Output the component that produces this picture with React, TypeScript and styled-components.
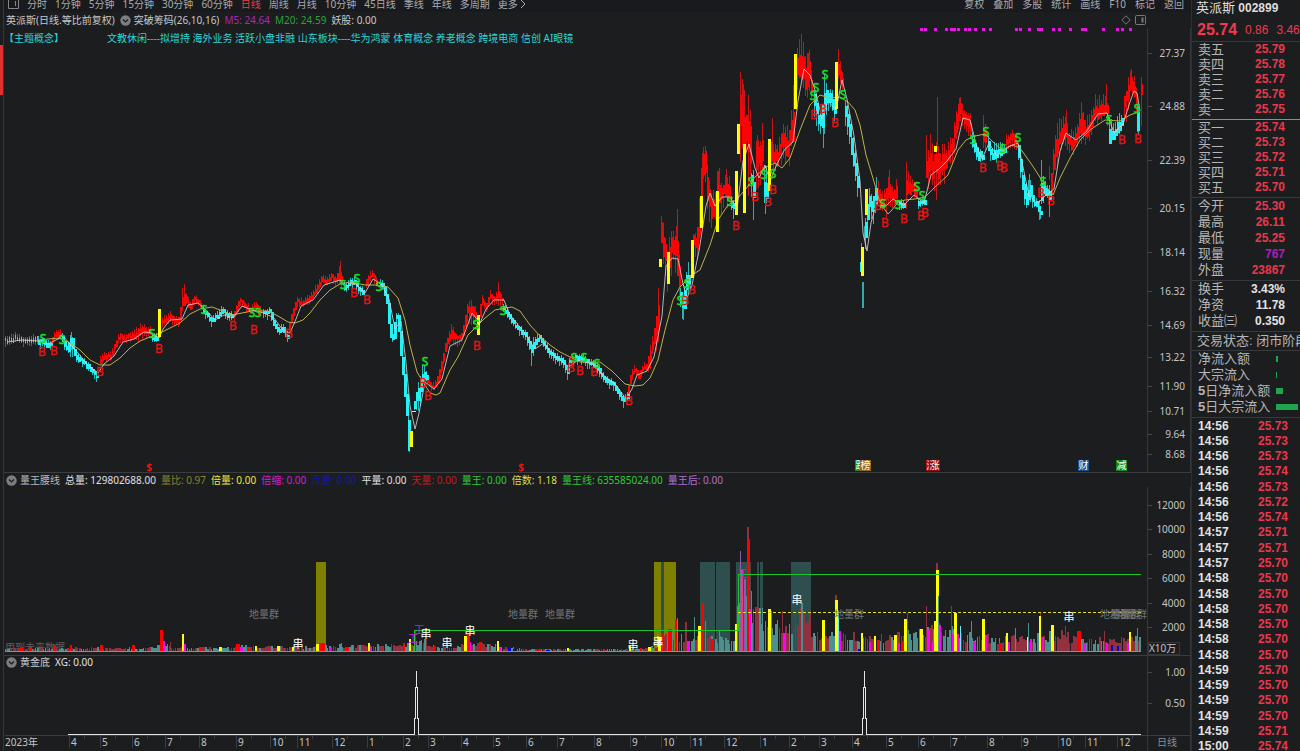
import React from 'react';
import styled, { createGlobalStyle } from 'styled-components';

const GlobalStyle = createGlobalStyle`
  * { box-sizing: border-box; }
  body {
    margin: 0;
    background: #1c1d1f;
    color: #c4c4c6;
    font-family: "Noto Sans", "Noto Sans CJK SC", sans-serif;
    font-size: 10px;
  }
`;

/* ---------- data ---------- */

type Point = number[]; // [x, middle] or [x, high, low]
type Tone = 'up' | 'down' | 'flat';

const segments: { tone: Tone; points: Point[] }[] = [
  { tone: 'flat', points: [[5, 341], [15, 338], [25, 341], [37, 339]] },
  { tone: 'down', points: [[38, 341], [45, 344], [51, 345]] },
  { tone: 'up', points: [[52, 341], [55, 333], [60, 335]] },
  { tone: 'down', points: [[62, 338], [67, 351], [71, 333, 348], [75, 355], [80, 361], [88, 366], [96, 376]] },
  { tone: 'up', points: [[100, 361], [104, 357], [110, 356], [115, 347], [119, 337], [125, 338], [133, 336], [140, 326, 336], [150, 332]] },
  { tone: 'down', points: [[152, 336], [157, 339]] },
  { tone: 'up', points: [[162, 322], [170, 317], [178, 322], [181, 312], [183, 290, 308], [187, 300], [190, 308], [194, 299], [201, 305]] },
  { tone: 'down', points: [[203, 311], [211, 321], [216, 317], [222, 311], [226, 315], [231, 316]] },
  { tone: 'up', points: [[234, 315], [240, 301], [245, 306], [250, 311], [256, 306], [261, 313]] },
  { tone: 'down', points: [[263, 314], [270, 311], [274, 324], [278, 331], [283, 328], [287, 337]] },
  { tone: 'up', points: [[289, 328], [292, 317], [297, 300], [302, 304], [311, 297], [316, 289], [321, 280], [326, 282], [331, 277], [336, 281], [340, 268, 282], [342, 283]] },
  { tone: 'down', points: [[344, 288], [350, 283], [355, 281], [358, 289], [363, 293]] },
  { tone: 'up', points: [[366, 283], [369, 276], [373, 276], [377, 283]] },
  { tone: 'down', points: [[380, 284], [384, 288], [388, 305], [391, 335], [393, 341], [396, 317], [399, 318], [401, 350], [404, 375], [407, 405, 415], [409, 425, 450]] },
  { tone: 'down', points: [[414, 406], [417, 392, 408], [420, 380, 398], [423, 366, 382], [426, 376]] },
  { tone: 'up', points: [[427, 382], [433, 388], [438, 380], [442, 362], [447, 342], [451, 329, 341], [457, 339], [462, 337], [465, 322], [468, 302, 318], [475, 308, 320]] },
  { tone: 'up', points: [[480, 312], [482, 300], [486, 308], [490, 296], [495, 300], [498, 290, 302], [502, 301]] },
  { tone: 'down', points: [[503, 308], [510, 318], [515, 326], [520, 330], [525, 335], [531, 343, 357], [536, 340], [540, 337], [545, 346], [550, 354], [557, 358], [563, 362], [567, 370], [569, 362]] },
  { tone: 'up', points: [[570, 360], [573, 361]] },
  { tone: 'down', points: [[575, 358], [580, 358], [585, 360], [590, 364], [598, 368], [602, 377], [608, 382], [614, 385], [618, 392], [623, 401], [627, 397]] },
  { tone: 'up', points: [[628, 394], [631, 373], [635, 370], [639, 378], [643, 367], [647, 369], [650, 350, 364], [654, 335, 350], [657, 312, 335], [659, 292, 330]] },
  { tone: 'up', points: [[661, 225, 245], [664, 234, 260], [667, 258, 286], [670, 232, 262], [674, 240, 255], [677, 228, 270], [679, 260, 294]] },
  { tone: 'down', points: [[680, 290, 304], [683, 302, 318], [686, 275, 295], [689, 266, 285]] },
  { tone: 'up', points: [[693, 235, 250], [697, 238, 252], [700, 205, 230], [702, 156, 180], [705, 148, 178], [708, 180, 208], [712, 198, 220], [715, 193, 218], [718, 172, 200], [722, 190, 204], [726, 175, 194], [729, 185, 206]] },
  { tone: 'down', points: [[731, 198, 208], [735, 203, 214]] },
  { tone: 'up', points: [[740, 82, 130], [743, 95, 145], [746, 125, 155], [748, 100, 160], [750, 125, 180]] },
  { tone: 'down', points: [[751, 175, 192], [754, 180, 210]] },
  { tone: 'up', points: [[756, 142, 178], [760, 150, 175], [763, 128, 165]] },
  { tone: 'down', points: [[764, 178, 206], [767, 175, 195]] },
  { tone: 'up', points: [[771, 145, 165], [776, 148, 164], [780, 142, 162], [783, 130, 150], [786, 138, 165], [790, 132, 155], [793, 100, 140]] },
  { tone: 'up', points: [[797, 55, 80], [801, 45, 78], [805, 65, 92], [809, 60, 85], [812, 85, 104]] },
  { tone: 'down', points: [[814, 92, 108], [818, 112, 128], [821, 120, 134], [824, 86, 120], [828, 90, 102], [831, 93, 108], [834, 104, 118]] },
  { tone: 'up', points: [[838, 62, 80], [841, 66, 82], [843, 80, 94]] },
  { tone: 'down', points: [[845, 104, 122], [850, 124, 140], [853, 148, 172], [857, 172, 190]] },
  { tone: 'down', points: [[865, 225, 245], [869, 195, 210], [873, 200, 215], [876, 185, 208]] },
  { tone: 'up', points: [[878, 185, 202], [883, 197, 208], [889, 182, 204], [894, 192, 203], [897, 180, 200]] },
  { tone: 'down', points: [[899, 203], [904, 205]] },
  { tone: 'up', points: [[906, 178, 198], [912, 182, 192], [916, 186, 198]] },
  { tone: 'down', points: [[918, 203], [924, 202]] },
  { tone: 'up', points: [[926, 155, 180], [930, 148, 180], [934, 158, 182], [937, 140, 178], [940, 160, 182], [943, 150, 178], [947, 150, 162], [952, 140, 158], [956, 118, 142], [960, 100, 118], [964, 112, 126], [970, 118, 132]] },
  { tone: 'down', points: [[972, 136, 146], [977, 150, 162], [982, 152, 160]] },
  { tone: 'up', points: [[983, 125, 142], [986, 124, 142]] },
  { tone: 'down', points: [[988, 138, 150], [991, 152, 162], [995, 146, 158], [1000, 145, 155], [1004, 150]] },
  { tone: 'up', points: [[1006, 138, 148], [1012, 132, 144], [1017, 138, 146]] },
  { tone: 'down', points: [[1018, 145, 156], [1022, 168, 188], [1026, 195, 208], [1029, 178, 200], [1033, 203], [1036, 203], [1040, 212]] },
  { tone: 'down', points: [[1041, 175, 200], [1045, 186, 196], [1049, 188, 200]] },
  { tone: 'up', points: [[1051, 178, 195], [1054, 148, 172], [1058, 130, 155], [1063, 120, 140], [1068, 134, 150], [1073, 135, 150], [1077, 130, 145], [1081, 112, 138], [1085, 125, 140], [1090, 118, 134], [1095, 102, 120], [1099, 104, 122], [1103, 100, 116], [1107, 105, 120]] },
  { tone: 'down', points: [[1109, 124, 142], [1114, 128, 138], [1118, 120, 134], [1122, 117, 128]] },
  { tone: 'up', points: [[1124, 100, 116], [1128, 84, 104], [1131, 75, 88], [1134, 82, 100], [1136, 92, 106]] },
  { tone: 'down', points: [[1137, 106, 132]] },
  { tone: 'up', points: [[1141, 82, 98]] },
];

/* single long wicks: [x, top, bottom] */
const upWicks: Point[] = [
  [182, 288, 308], [340, 261, 278], [498, 282, 300], [662, 222, 240], [676, 226, 250], [702, 153, 190], [705, 146, 180],
  [718, 171, 200], [726, 169, 190], [740, 72, 120], [743, 84, 140], [748, 95, 150], [757, 135, 170], [762, 123, 150], [772, 118, 160],
  [783, 126, 140], [793, 94, 130], [797, 50, 70], [801, 38, 80], [808, 53, 80], [838, 49, 70], [889, 170, 190], [906, 162, 190],
  [926, 135, 170], [930, 137, 170], [937, 97, 150], [959, 98, 110], [983, 115, 145], [1049, 166, 180], [1066, 110, 130], [1081, 105, 120],
  [1095, 94, 110], [1106, 84, 110], [1131, 69, 80], [1141, 80, 126],
];
const downWicks: Point[] = [
  [71, 332, 350], [409, 421, 452], [531, 345, 366], [567, 366, 380], [683, 305, 320], [692, 255, 275], [753, 190, 220], [765, 190, 214],
  [823, 110, 148], [861, 243, 272], [862, 282, 308], [863, 282, 308], [864, 226, 240], [876, 177, 200], [1029, 174, 200], [1039, 200, 220], [1041, 160, 200],
  [1049, 190, 217], [1138, 106, 134],
];
/* [x, top, bottom] */
const surgeBars: Point[] = [
  [158, 309, 337], [410, 431, 447], [477, 315, 335], [659, 259, 267], [667, 252, 284], [691, 240, 278], [700, 196, 228], [716, 191, 232],
  [735, 171, 215], [737, 124, 154], [743, 144, 213], [768, 139, 191], [794, 54, 109], [835, 62, 109], [865, 189, 215], [861, 247, 276], [934, 146, 152],
];

const longAverage: Point[] = [
  [37, 340], [60, 338], [70, 343], [80, 350], [90, 360], [100, 365], [110, 365], [120, 358], [130, 348], [140, 341], [150, 337], [158, 334],
  [168, 329], [180, 323], [190, 314], [200, 309], [212, 307], [220, 310], [232, 315], [242, 313], [252, 311], [268, 311], [278, 316], [288, 322],
  [295, 323], [303, 320], [310, 313], [320, 300], [330, 290], [340, 284], [350, 282], [365, 285], [375, 285], [388, 287], [398, 298], [405, 320],
  [410, 345], [417, 372], [425, 385], [430, 393], [436, 395], [440, 393], [450, 370], [458, 357], [468, 335], [476, 327], [485, 318], [495, 310],
  [505, 308], [512, 307], [520, 311], [530, 325], [540, 336], [550, 345], [560, 352], [570, 357], [580, 362], [600, 362], [612, 371], [625, 384],
  [635, 386], [643, 385], [650, 378], [658, 360], [665, 330], [673, 300], [680, 287], [692, 275], [700, 270], [710, 245], [718, 220], [728, 205],
  [736, 200], [745, 190], [755, 177], [766, 167], [775, 163], [782, 168], [790, 158], [800, 130], [810, 105], [820, 95], [830, 98], [840, 97],
  [848, 102], [855, 110], [860, 125], [866, 155], [875, 185], [880, 203], [888, 214], [892, 210], [898, 202], [905, 200], [915, 199], [925, 197],
  [935, 187], [948, 175], [958, 150], [966, 140], [975, 136], [985, 134], [993, 142], [1002, 150], [1012, 145], [1020, 148], [1032, 165],
  [1045, 185], [1053, 195], [1060, 178], [1070, 158], [1080, 140], [1090, 130], [1105, 120], [1120, 121], [1130, 115], [1138, 112],
];
const shortAverage: Point[] = [
  [5, 341], [20, 339], [36, 340], [46, 343], [54, 339], [61, 335], [68, 343], [76, 352], [86, 364], [96, 372], [102, 363], [112, 355], [121, 341],
  [132, 338], [142, 331], [150, 332], [157, 337], [161, 328], [168, 319], [180, 318], [186, 304], [196, 302], [204, 309], [213, 319], [222, 314],
  [231, 317], [240, 305], [250, 309], [262, 312], [272, 317], [280, 328], [288, 332], [294, 318], [299, 305], [311, 299], [322, 284], [338, 279],
  [345, 285], [354, 283], [363, 292], [371, 278], [380, 284], [387, 298], [393, 328], [399, 320], [404, 362], [408, 405], [413, 428], [417, 412],
  [423, 381], [432, 388], [440, 378], [448, 345], [460, 339], [470, 312], [478, 322], [484, 308], [492, 299], [502, 299], [508, 314], [522, 331],
  [533, 348], [542, 342], [552, 354], [567, 366], [576, 359], [590, 363], [600, 373], [614, 384], [624, 398], [630, 388], [635, 374], [645, 370],
  [652, 356], [660, 315], [664, 265], [670, 257], [676, 258], [681, 283], [685, 297], [690, 284], [697, 250], [704, 205], [708, 192], [713, 205],
  [720, 196], [728, 196], [735, 208], [741, 160], [747, 143], [753, 167], [757, 177], [763, 164], [768, 180], [775, 163], [783, 148], [791, 141],
  [796, 100], [802, 68], [808, 74], [814, 92], [820, 118], [826, 100], [834, 109], [840, 79], [845, 98], [852, 135], [858, 180], [861, 232],
  [865, 250], [869, 222], [874, 204], [884, 205], [891, 198], [902, 204], [912, 194], [922, 202], [929, 174], [937, 168], [945, 160], [954, 148],
  [961, 117], [968, 119], [974, 143], [980, 158], [987, 142], [995, 155], [1008, 145], [1016, 142], [1021, 166], [1027, 195], [1036, 202],
  [1043, 195], [1052, 188], [1058, 150], [1064, 132], [1074, 139], [1084, 131], [1096, 113], [1105, 112], [1112, 132], [1121, 123], [1128, 101],
  [1132, 90], [1135, 92], [1138, 110],
];

const buyMarks: Point[] = [
  [42, 352], [54, 351], [159, 349], [100, 372], [233, 326], [254, 330], [289, 334], [354, 293], [367, 300], [423, 383], [428, 396], [477, 346],
  [571, 368], [580, 371], [594, 372], [629, 401], [685, 301], [692, 290], [736, 226], [755, 197], [768, 202], [773, 190], [814, 115], [823, 109],
  [835, 123], [885, 223], [878, 206], [904, 219], [921, 216], [925, 213], [983, 168], [1000, 166], [1004, 168], [1041, 193], [1051, 201],
  [1122, 140], [1138, 139],
];
const sellMarks: Point[] = [
  [43, 339], [62, 340], [152, 334], [204, 310], [252, 313], [258, 313], [343, 285], [357, 279], [379, 287], [425, 362], [476, 325], [503, 311],
  [574, 358], [584, 358], [597, 364], [680, 301], [687, 284], [730, 202], [751, 182], [764, 175], [773, 174], [813, 96], [816, 88], [825, 75],
  [843, 95], [883, 204], [898, 205], [917, 187], [922, 196], [973, 140], [986, 132], [1003, 149], [1018, 138], [1043, 182], [1109, 120], [1137, 109],
];
const topDots = [920, 924, 934, 945, 950, 953, 957, 964, 968, 974, 982, 989, 1015, 1019, 1028, 1037, 1040, 1052, 1058, 1069, 1081, 1084, 1102, 1116, 1121, 1129];

const priceScale: [string, number][] = [
  ['27.37', 53], ['24.88', 106], ['22.39', 160], ['20.15', 208], ['18.14', 252], ['16.32', 291],
  ['14.69', 325], ['13.22', 357], ['11.90', 386], ['10.71', 411], ['9.64', 434], ['8.68', 454],
];
const volumeScale: [string, number][] = [['12000', 505], ['10000', 529], ['8000', 554], ['6000', 578], ['4000', 603], ['2000', 627]];
const signalScale: [string, number][] = [['1.00', 672], ['0.50', 703]];

const months: [string, number][] = [
  ['4', 70], ['5', 101], ['6', 133], ['7', 166], ['8', 200], ['9', 237], ['10', 271], ['11', 298], ['12', 333], ['1', 368], ['2', 404], ['3', 429],
  ['4', 462], ['5', 494], ['6', 527], ['7', 558], ['8', 595], ['9', 631], ['10', 662], ['11', 691], ['12', 725], ['1', 761], ['2', 790], ['3', 820],
  ['4', 853], ['5', 887], ['6', 919], ['7', 951], ['8', 988], ['9', 1022], ['10', 1059], ['11', 1086], ['12', 1118],
];

const volumeLevels: Point[] = [
  [5, 3], [150, 3], [165, 8], [175, 4], [200, 4], [225, 3], [235, 5], [310, 4], [320, 6], [400, 6], [415, 9], [425, 10], [440, 5], [470, 7], [490, 7],
  [505, 4], [530, 2], [640, 2], [655, 5], [665, 16], [690, 15], [710, 16], [720, 15], [733, 9], [738, 48], [748, 62], [753, 44], [765, 30], [780, 26],
  [790, 26], [798, 46], [808, 34], [815, 19], [850, 16], [870, 14], [890, 16], [915, 20], [935, 24], [950, 24], [960, 17], [1000, 13], [1060, 18],
  [1080, 13], [1110, 11], [1141, 14],
];

const YELLOW = '#ffff00';
const RED = '#ff0000';
const MAGENTA = '#ff00ff';
const TEAL = '#4c8f8f';
const WINE = '#93303f';
const BLUE = '#0000e0';

/* [x, height, width, colour] */
const volumePeaks: [number, number, number, string][] = [
  [20, 4, 3, RED], [30, 4, 2, RED], [53, 6, 3, RED], [70, 6, 2, RED], [100, 6, 3, RED], [132, 6, 3, RED], [160, 21, 3, RED], [163, 10, 2, MAGENTA],
  [170, 9, 1, WINE], [182, 17, 2, YELLOW], [184, 7, 2, MAGENTA], [199, 4, 3, RED], [219, 4, 3, YELLOW], [236, 7, 4, RED], [240, 4, 3, MAGENTA],
  [247, 3, 2, RED], [255, 5, 2, YELLOW], [277, 5, 3, YELLOW], [292, 4, 2, YELLOW], [316, 7, 3, YELLOW], [319, 8, 6, RED], [329, 3, 2, MAGENTA],
  [341, 8, 1, TEAL], [346, 4, 3, RED], [368, 8, 2, YELLOW], [370, 4, 2, MAGENTA], [403, 8, 2, RED], [409, 12, 2, YELLOW], [414, 21, 2, RED],
  [424, 12, 2, TEAL], [433, 5, 3, RED], [464, 15, 3, YELLOW], [467, 17, 3, RED], [470, 9, 1, MAGENTA], [479, 9, 3, RED], [497, 10, 2, YELLOW],
  [499, 4, 2, MAGENTA], [508, 3, 3, BLUE], [513, 2, 3, BLUE], [538, 2, 3, RED], [546, 1, 4, BLUE], [567, 3, 2, YELLOW], [629, 5, 2, YELLOW],
  [640, 3, 2, RED], [648, 4, 3, YELLOW], [658, 14, 3, YELLOW], [661, 18, 3, RED], [668, 22, 4, RED], [675, 31, 3, RED], [677, 33, 1, TEAL],
  [685, 29, 2, WINE], [687, 10, 3, MAGENTA], [694, 34, 1, TEAL], [698, 25, 3, YELLOW], [701, 48, 3, RED], [705, 30, 1, TEAL], [711, 12, 3, RED],
  [719, 20, 1, TEAL], [735, 27, 2, YELLOW], [740, 100, 1, '#8a5bb0'], [741, 82, 2, '#f03a70'], [744, 72, 2, '#8a5bb0'], [747, 124, 2, WINE],
  [747, 112, 3, RED], [751, 60, 1, TEAL], [749, 42, 2, MAGENTA], [757, 44, 2, WINE], [762, 43, 1, TEAL], [768, 42, 3, YELLOW], [771, 40, 1, TEAL],
  [777, 28, 1, TEAL], [782, 40, 1, WINE], [783, 18, 3, MAGENTA], [800, 44, 1, WINE], [822, 31, 3, YELLOW], [835, 56, 2, WINE], [835, 51, 3, YELLOW],
  [838, 40, 1, '#60f0f0'], [839, 20, 2, MAGENTA], [858, 2, 2, BLUE], [861, 18, 2, YELLOW], [869, 9, 2, MAGENTA], [874, 15, 2, YELLOW],
  [877, 11, 3, RED], [894, 16, 3, YELLOW], [898, 8, 2, MAGENTA], [901, 10, 4, RED], [907, 38, 1, WINE], [904, 32, 3, YELLOW], [920, 22, 3, YELLOW],
  [926, 45, 1, WINE], [927, 21, 3, MAGENTA], [932, 10, 2, MAGENTA], [934, 30, 2, YELLOW], [936, 88, 2, WINE], [936, 81, 3, YELLOW],
  [938, 55, 1, TEAL], [939, 26, 2, MAGENTA], [951, 45, 1, WINE], [952, 17, 3, MAGENTA], [954, 38, 3, YELLOW], [957, 17, 2, MAGENTA], [960, 25, 1, '#60f0f0'],
  [971, 30, 1, TEAL], [973, 9, 3, MAGENTA], [982, 32, 3, YELLOW], [985, 16, 2, MAGENTA], [999, 8, 3, RED], [1006, 18, 2, YELLOW], [1008, 9, 2, MAGENTA],
  [1015, 23, 1, TEAL], [1027, 14, 2, YELLOW], [1030, 12, 2, MAGENTA], [1028, 28, 1, TEAL], [1040, 38, 1, WINE], [1039, 35, 2, YELLOW],
  [1042, 14, 2, MAGENTA], [1051, 26, 3, YELLOW], [1065, 25, 1, WINE], [1077, 20, 4, RED], [1083, 8, 3, MAGENTA], [1104, 20, 1, WINE],
  [1106, 8, 2, MAGENTA], [1111, 6, 2, BLUE], [1117, 5, 2, BLUE], [1127, 8, 2, MAGENTA], [1129, 19, 2, YELLOW], [1137, 23, 1, TEAL],
];

/* [x, width, colour] */
const zones: [number, number, string][] = [
  [316, 10, '#808000'], [654, 7, '#808000'], [661, 3, '#2f4f4f'], [664, 12, '#808000'], [700, 15, '#2f4f4f'], [716, 14, '#2f4f4f'],
  [736, 15, '#2f4f4f'], [757, 2, '#2f4f4f'], [760, 3, '#2f4f4f'], [791, 20, '#2f4f4f'],
];

/* ---------- path building ---------- */

const noise = (seed: number) => {
  const v = Math.sin(seed * 127.1) * 43758.5453;
  return v - Math.floor(v);
};
const topOf = (p: Point) => (p.length === 3 ? p[1] : p[1] - 3);
const bottomOf = (p: Point) => (p.length === 3 ? p[2] : p[1] + 3);
const levelAt = (points: Point[], x: number, read: (p: Point) => number) => {
  const i = points.findIndex((p) => p[0] > x);
  if (i < 0) return read(points[points.length - 1]);
  if (i === 0) return read(points[0]);
  const t = (x - points[i - 1][0]) / (points[i][0] - points[i - 1][0]);
  return read(points[i - 1]) * (1 - t) + read(points[i]) * t;
};
const line = (points: Point[]) => 'M' + points.map((p) => `${p[0]} ${p[1]}`).join('L');
const box = (x: number, y: number, w: number, h: number) => `M${x} ${Math.round(y)}h${w}v${Math.round(h)}h${-w}z`;

const buildCandles = () => {
  const wick = { up: '', down: '', flat: '' };
  const body = { up: '', down: '', flat: '' };
  segments.forEach(({ tone, points }) => {
    const end = points[points.length - 1][0];
    for (let x = points[0][0]; x <= end; x += 2) {
      const top = levelAt(points, x, topOf);
      const bottom = levelAt(points, x, bottomOf);
      const next = levelAt(points, x + 2, topOf);
      const reach = bottom - top;
      wick[tone] += box(x, top - noise(x) * reach * 0.5, 1, reach * (1.1 + noise(x + 0.5) * 0.7));
      /* a body always reaches the level of the next one, so steep moves stay unbroken */
      const start = top + noise(x + 0.2) * reach * 0.35;
      const height = Math.max(reach * (0.5 + noise(x + 0.7) * 0.35), Math.abs(next - top) + 1);
      const width = { up: 2, down: 3, flat: 1 }[tone];
      body[tone] += box(x, next < top - 4 ? start - (top - next) / 2 : start, width, height);
    }
  });
  return { wick, body };
};
const candles = buildCandles();

const buildVolume = () => {
  let wine = '';
  let teal = '';
  for (let x = 5; x < 1141; x += 2) {
    const h = Math.max(1, levelAt(volumeLevels, x, (p) => p[1]) * (0.5 + noise(x + 0.3) * 0.7));
    const w = noise(x + 0.9) > 0.35 ? 2 : 1;
    if (noise(Math.floor(x / 6)) + noise(x) * 0.6 > 0.75) wine += box(x, 651 - h, w, h);
    else teal += box(x, 651 - h, w, h);
  }
  return { wine, teal };
};
const volume = buildVolume();

/* ---------- layout parts ---------- */

const Page = styled.div`
  display: flex;
  min-height: 100vh;
  overflow: hidden;
`;
const Rail = styled.div`
  flex: none;
  width: 4px;
  padding-top: 45px;
  border-right: 1px solid #34363a;
`;
const RailMark = styled.div`
  height: 50px;
  background: #e03030;
`;
const Charts = styled.main`
  flex: 1;
  min-width: 0;
  display: flex;
  flex-direction: column;
`;
const Toolbar = styled.nav`
  display: flex;
  align-items: flex-end;
  gap: 8px;
  height: 12px;
  padding: 0 7px 0 4px;
  overflow: hidden;
  background: #191a1d;
`;
const ToolGroup = styled.div`
  display: flex;
  align-items: center;
  gap: 9px;
  margin-left: auto;
`;
const ToolButton = styled.button<{ $active?: boolean }>`
  display: flex;
  align-items: center;
  gap: 1px;
  padding: 0;
  border: 0;
  background: none;
  font: inherit;
  line-height: 16px;
  white-space: nowrap;
  color: ${(p) => (p.$active ? '#e84040' : '#a9abae')};
`;
const Legend = styled.div<{ $height: number; $line?: boolean }>`
  display: flex;
  align-items: center;
  gap: 5px;
  height: ${(p) => p.$height}px;
  padding-left: 2px;
  border-top: ${(p) => (p.$line ? '1px solid #3a3c40' : '0')};
  line-height: 13px;
  white-space: nowrap;
`;
const LegendItem = styled.span<{ $color?: string }>`
  color: ${(p) => p.$color ?? '#c8c8ca'};
`;
const LegendTools = styled.span`
  display: flex;
  gap: 6px;
  margin: 0 47px 0 auto;
`;
const IconButton = styled.button`
  display: flex;
  margin-right: -2px;
  padding: 0;
  border: 0;
  background: none;
`;
const Plot = styled.div`
  position: relative;
`;
const Canvas = styled.svg`
  display: block;
  width: 100%;
  height: auto;
  overflow: visible;
  font-family: "Noto Sans", "Noto Sans CJK SC", sans-serif;
  font-size: 10px;
`;
const Topics = styled.p`
  position: absolute;
  top: 3px;
  left: 0;
  display: flex;
  gap: 43px;
  margin: 0;
  line-height: 14px;
  color: #2bd6d6;
  white-space: nowrap;
`;
const Quote = styled.aside`
  flex: none;
  width: 109px;
  border-left: 1px solid #2c2e31;
  display: flex;
  flex-direction: column;
  overflow: hidden;
  white-space: nowrap;
  font-family: "Liberation Sans", "Noto Sans CJK SC", sans-serif;
  font-size: 12px;
`;
const QuoteTitle = styled.h1`
  margin: 0;
  padding-left: 4px;
  font-size: 12px;
  line-height: 16px;
  color: #dcdcde;
`;
const StockName = styled.span`
  font-size: 13px;
  font-weight: 400;
`;
const PriceRow = styled.div`
  display: flex;
  align-items: center;
  gap: 8px;
  height: 26px;
  padding: 2px 0 0 5px;
  border-bottom: 1px solid #37393d;
  color: #f03a4e;
`;
const LastPrice = styled.strong`
  font-size: 16px;
`;
const Block = styled.div<{ $accent?: boolean }>`
  padding: 0 15px 2px 6px;
  border-bottom: 1px solid ${(p) => (p.$accent ? '#b08a40' : '#37393d')};
`;
const Data = styled.table<{ $row: number }>`
  width: 100%;
  border-collapse: collapse;
  line-height: ${(p) => p.$row}px;
  th, td { padding: 0; height: ${(p) => p.$row}px; }
  th { text-align: left; font-size: 13px; font-weight: 400; color: #b4b6b9; }
`;
const Value = styled.td<{ $color?: string }>`
  text-align: right;
  font-weight: 700;
  color: ${(p) => p.$color ?? '#e8384c'};
`;
const Status = styled.div`
  height: 19px;
  padding-left: 5px;
  border-bottom: 1px solid #37393d;
  font-size: 13px;
  line-height: 18px;
  color: #b4b6b9;
`;
const Flow = styled.div`
  display: grid;
  grid-template-columns: 78px 1fr;
  align-items: center;
  grid-auto-rows: 16px;
  padding: 0 0 2px 6px;
  border-bottom: 1px solid #37393d;
  font-size: 13px;
  line-height: 16px;
  color: #b4b6b9;
`;
const FlowBar = styled.span<{ $width: number }>`
  width: ${(p) => p.$width}px;
  height: 6px;
  background: #1fa54c;
`;
const Tape = styled.div`
  flex: 1 0 332px;
  height: 332px;
  overflow: hidden;
  padding: 0 12px 0 6px;
`;
const TapeTable = styled.table`
  width: 100%;
  height: 336px;
  border-collapse: collapse;
  font-weight: 700;
  line-height: 14px;
  td { padding: 0; }
`;
const Time = styled.td`
  color: #e2e2e4;
`;

/* ---------- small drawings ---------- */

const CollapseIcon = () => (
  <svg width="11" height="11" viewBox="0 0 11 11" aria-hidden="true">
    <circle cx="5.5" cy="5.5" r="5.2" fill="#7c7e80" />
    <path d="M3 4.5l2.5 2.4L8 4.5" fill="none" stroke="#1c1d1f" strokeWidth="1.4" />
  </svg>
);
const PanelIcon = () => (
  <svg width="11" height="10" viewBox="0 0 11 10" aria-hidden="true">
    <rect x=".5" y=".5" width="10" height="9" rx="1" fill="none" stroke="#77797c" />
    <path d="M6.5 2.5h2v5h-2z" fill="#77797c" />
  </svg>
);
const DiamondIcon = () => (
  <svg width="10" height="10" viewBox="0 0 10 10" aria-hidden="true">
    <path d="M5 .8L9.2 5 5 9.2.8 5z" fill="none" stroke="#77797c" />
  </svg>
);

const Scale = ({ items }: { items: [string, number][] }) => (
  <g fill="#c2c4c6" textAnchor="end">
    {items.map(([label, y]) => (
      <g key={label}>
        <path d={`M1148 ${y + 0.5}h4`} stroke="#44464a" />
        <text x="1185" y={y + 4}>{label}</text>
      </g>
    ))}
  </g>
);

const Frame = ({ top, bottom }: { top: number; bottom: number }) => (
  <path d={`M1147.5 ${top}V${bottom}M1190.5 ${top}V${bottom}`} stroke="#34363a" fill="none" />
);

const Badge = ({ x, fill, children }: { x: number; fill: string; children: string }) => (
  <g>
    <rect x={x} y="460" width="11" height="11" fill={fill} />
    <text x={x + 0.5} y="469" fill="#ffffff">{children}</text>
  </g>
);

const PricePlot = () => (
  <Plot>
    <Canvas viewBox="4 28 1187 444" role="img" aria-label="日线价格走势">
      <Frame top={28} bottom={472} />
      <Scale items={priceScale} />
      <g shapeRendering="crispEdges">
        <path d={topDots.map((x) => box(x, 28, 3, 3)).join('')} fill="#e815e8" />
        <path d={candles.wick.flat} fill="#8f4550" />
        <path d={candles.body.flat} fill="#c49aa0" />
        <path d={candles.wick.up + upWicks.map((w) => box(w[0], w[1], 1, w[2] - w[1])).join('')} fill="#c81414" />
        <path d={candles.wick.down} fill="#2fb4b8" />
        <path d={downWicks.map((w) => box(w[0], w[1], 1, w[2] - w[1])).join('')} fill="#35a9ac" />
      </g>
      <g shapeRendering="crispEdges">
        <path d={candles.body.up} fill="#fa0505" />
        <path d={candles.body.down} fill="#22f2f6" />
        <path d="M408 432h2v19h-2zM860 262h2v10h-2z" fill="#22f2f6" />
      </g>
      <path d={line(longAverage)} fill="none" stroke="#bdb04c" />
      <path d={line(shortAverage.map(([x, y]) => [x + 2, y + 1]))} fill="none" stroke="#d8cccc" strokeOpacity=".85" />
      <g shapeRendering="crispEdges" fill={YELLOW}>
        <path d={surgeBars.map((b) => box(b[0], b[1], 3, b[2] - b[1])).join('')} />
        <path d="M412 411h4v1h-4z" />
      </g>
      <g textAnchor="middle" fontSize="12" fill="#e81414" stroke="#e81414" strokeWidth=".3">
        {buyMarks.map(([x, y]) => <text key={x} x={x} y={y + 4}>B</text>)}
      </g>
      <g textAnchor="middle" fontSize="12" fill="#12e022" stroke="#12e022" strokeWidth=".5">
        {sellMarks.map(([x, y]) => <text key={x} x={x} y={y + 4}>S</text>)}
      </g>
      <g fill="#f01010" fontWeight="700" textAnchor="middle">
        <text x="149" y="471">$</text>
        <text x="521" y="471">$</text>
      </g>
      <Badge x={855} fill="#128a1e">跌</Badge>
      <Badge x={860} fill="#9a6418">榜</Badge>
      <Badge x={926} fill="#b01212">涨</Badge>
      <Badge x={929} fill="#8e0d0d">涨</Badge>
      <Badge x={1078} fill="#17508c">财</Badge>
      <Badge x={1116} fill="#10891c">减</Badge>
    </Canvas>
    <Topics>
      <span>【主题概念】</span>
      <span>文教休闲----拟增持 海外业务 活跃小盘非融 山东板块----华为鸿蒙 体育概念 养老概念 跨境电商 信创 AI眼镜</span>
    </Topics>
  </Plot>
);

const VolumePlot = () => (
  <Canvas viewBox="4 487 1187 168" role="img" aria-label="成交量">
    <Frame top={487} bottom={655} />
    <Scale items={volumeScale} />
    <rect x="1148.5" y="642.5" width="31" height="12" fill="#1c1d1f" stroke="#34363a" />
    <text x="1149" y="652" fill="#c2c4c6">X10万</text>
    <text x="5" y="651" fill="#5c5e61">用到未来数据</text>
    <g shapeRendering="crispEdges">
      {zones.map(([x, w, fill]) => <rect key={x} x={x} y="562" width={w} height="89" fill={fill} />)}
      <path d={volume.wine} fill={WINE} />
      <path d={volume.teal} fill={TEAL} />
      {volumePeaks.map(([x, h, w, fill], i) => <rect key={i} x={x} y={651 - h} width={w} height={h} fill={fill} />)}
      <path d="M414.5 651V630.5H738.5V574.5H1141" fill="none" stroke="#1fc32a" />
      <path d="M738 612.5H1141" stroke="#dede30" strokeDasharray="3 2" />
      <path d="M5 651.5H1141" stroke="#a878c0" />
    </g>
    <g fill="#737578">
      {[249, 508, 545, 834, 1100, 1110, 1117].map((x) => <text key={x} x={x} y="618">地量群</text>)}
    </g>
    <g fill="#ffffff" textAnchor="middle" fontSize="11">
      {[[298, 644], [426, 634], [447, 643], [470, 631], [633, 645], [658, 642], [797, 600], [1069, 617]].map(([x, y]) => (
        <text key={x} x={x} y={y + 4}>串</text>
      ))}
    </g>
    <g fill="#c01cc8" textAnchor="middle" fontSize="11">
      {[[413, 639], [419, 630], [743, 574]].map(([x, y]) => <text key={x} x={x} y={y + 4}>工</text>)}
    </g>
  </Canvas>
);

const SignalPlot = () => (
  <Canvas viewBox="4 669 1187 82" role="img" aria-label="黄金底信号">
    <Frame top={655} bottom={751} />
    <Scale items={signalScale} />
    <path d="M5 735.5H1190" stroke="#3a3c40" />
    <g shapeRendering="crispEdges" stroke="#3a3c40">
      {months.map(([, x]) => <path key={x} d={`M${x - 1}.5 736v12M${x + 14}.5 736v3`} />)}
    </g>
    <path
      d="M68 734.5H414.5V718.5H415.5V687.5H416.5V671V687.5H417.5V718.5H418.5V734.5H862.5V718.5H863.5V687.5H864.5V671V687.5H865.5V718.5H866.5V734.5H1141"
      fill="none"
      stroke="#e4e4e4"
      shapeRendering="crispEdges"
    />
    <g fill="#c2c4c6">
      <text x="5" y="746">2023年</text>
      {months.map(([label, x]) => <text key={x} x={x + 1} y="746">{label}</text>)}
      <text x="1157" y="746" fill="#8c8e91">日线</text>
    </g>
  </Canvas>
);

/* ---------- quote panel ---------- */

const sells = [['卖五', '25.79'], ['卖四', '25.78'], ['卖三', '25.77'], ['卖二', '25.76'], ['卖一', '25.75']];
const buys = [['买一', '25.74'], ['买二', '25.73'], ['买三', '25.72'], ['买四', '25.71'], ['买五', '25.70']];
const today = [['今开', '25.30'], ['最高', '26.11'], ['最低', '25.25'], ['现量', '767', '#b31ac0'], ['外盘', '23867']];
const basics = [['换手', '3.43%', '#e2e2e4'], ['净资', '11.78', '#e2e2e4'], ['收益㈢', '0.350', '#e2e2e4']];
const flows: [React.ReactNode, number][] = [['净流入额', 2], ['大宗流入', 1], [<><b>5</b>日净流入额</>, 7], [<><b>5</b>日大宗流入</>, 22]];
const trades = [
  ['14:56', '25.73'], ['14:56', '25.73'], ['14:56', '25.73'], ['14:56', '25.74'], ['14:56', '25.73'], ['14:56', '25.72'], ['14:56', '25.74'],
  ['14:57', '25.71'], ['14:57', '25.71'], ['14:57', '25.70'], ['14:58', '25.70'], ['14:58', '25.70'], ['14:58', '25.70'], ['14:58', '25.70'],
  ['14:58', '25.70'], ['14:58', '25.70'], ['14:59', '25.70'], ['14:59', '25.70'], ['14:59', '25.70'], ['14:59', '25.70'], ['14:59', '25.71'],
  ['15:00', '25.74'],
];

const DataBlock = ({ rows, row, accent }: { rows: string[][]; row: number; accent?: boolean }) => (
  <Block $accent={accent}>
    <Data $row={row}>
      <tbody>
        {rows.map(([label, value, color]) => (
          <tr key={label}>
            <th scope="row">{label}</th>
            <Value $color={color}>{value}</Value>
          </tr>
        ))}
      </tbody>
    </Data>
  </Block>
);

const periods = ['分时', '1分钟', '5分钟', '15分钟', '30分钟', '60分钟', '日线', '周线', '月线', '10分钟', '45日线', '季线', '年线', '多周期'];
const tools = ['复权', '叠加', '多股', '统计', '画线', 'F10', '标记', '返回'];
const volumeLegend: [string, string][] = [
  ['量王腰线', '#b8babc'], ['总量: 129802688.00', '#e0e0e2'], ['量比: 0.97', '#85852a'], ['倍量: 0.00', '#e6e63a'], ['倍缩: 0.00', '#d01cd6'],
  ['百量: 0.00', '#1414b8'], ['平量: 0.00', '#e0e0e2'], ['天量: 0.00', '#c01c1c'], ['量王: 0.00', '#2ccc34'], ['倍数: 1.18', '#dede48'],
  ['量王线: 635585024.00', '#2ccc34'], ['量王后: 0.00', '#b070d0'],
];

export default function App() {
  return (
    <>
      <GlobalStyle />
      <Page>
        <Rail><RailMark /></Rail>
        <Charts>
          <Toolbar>
            <ToolButton aria-label="侧栏"><svg width="11" height="16" viewBox="0 0 11 16" aria-hidden="true"><path d="M.5 2.5h10v10H.5zM7.5 5v5" fill="none" stroke="#85878a" /></svg></ToolButton>
            {periods.map((name) => <ToolButton key={name} $active={name === '日线'}>{name}</ToolButton>)}
            <ToolButton>
              更多
              <svg width="7" height="10" viewBox="0 0 7 10" aria-hidden="true"><path d="M2 1l4 4-4 4" fill="none" stroke="#a9abae" /></svg>
            </ToolButton>
            <ToolGroup>{tools.map((name) => <ToolButton key={name}>{name}</ToolButton>)}</ToolGroup>
          </Toolbar>
          <Legend $height={16}>
            <LegendItem>英派斯(日线.等比前复权)</LegendItem>
            <IconButton aria-label="收起主图"><CollapseIcon /></IconButton>
            <LegendItem>突破筹码(26,10,16)</LegendItem>
            <LegendItem $color="#ab27bd">M5: 24.64</LegendItem>
            <LegendItem $color="#2ea03a">M20: 24.59</LegendItem>
            <LegendItem>妖股: 0.00</LegendItem>
            <LegendTools>
              <IconButton aria-label="标记点"><DiamondIcon /></IconButton>
              <IconButton aria-label="面板"><PanelIcon /></IconButton>
            </LegendTools>
          </Legend>
          <PricePlot />
          <Legend $height={15} $line>
            <IconButton aria-label="收起量图"><CollapseIcon /></IconButton>
            {volumeLegend.map(([label, color]) => <LegendItem key={label} $color={color}>{label}</LegendItem>)}
          </Legend>
          <VolumePlot />
          <Legend $height={14} $line>
            <IconButton aria-label="收起黄金底"><CollapseIcon /></IconButton>
            <LegendItem>黄金底</LegendItem>
            <LegendItem $color="#e0e0e2">XG: 0.00</LegendItem>
          </Legend>
          <SignalPlot />
        </Charts>
        <Quote>
          <QuoteTitle><StockName>英派斯</StockName> 002899</QuoteTitle>
          <PriceRow>
            <LastPrice>25.74</LastPrice>
            <span>0.86</span>
            <span>3.46</span>
          </PriceRow>
          <DataBlock rows={sells} row={15} accent />
          <DataBlock rows={buys} row={15} />
          <DataBlock rows={today} row={16} />
          <DataBlock rows={basics} row={16} />
          <Status>交易状态: 闭市阶段</Status>
          <Flow>
            {flows.map(([label, width], i) => (
              <React.Fragment key={i}>
                <span>{label}</span>
                <FlowBar $width={width} />
              </React.Fragment>
            ))}
          </Flow>
          <Tape>
            <TapeTable>
              <tbody>
                {trades.map(([time, price], i) => (
                  <tr key={i}>
                    <Time>{time}</Time>
                    <Value>{price}</Value>
                  </tr>
                ))}
              </tbody>
            </TapeTable>
          </Tape>
        </Quote>
      </Page>
    </>
  );
}
